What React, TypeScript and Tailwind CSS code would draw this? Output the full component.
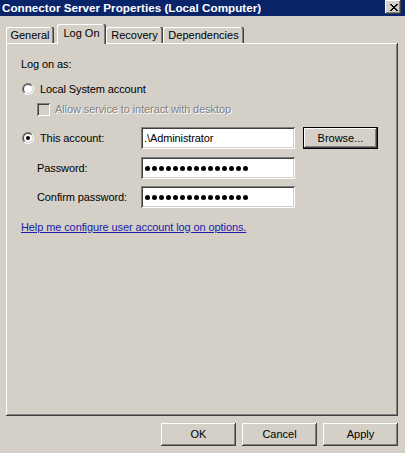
import type { ReactNode } from "react";

// classic 3D bevels
const raised =
  "bg-[#d4d0c8] shadow-[inset_-1px_-1px_#404040,inset_1px_1px_#fff,inset_-2px_-2px_#808080]";
const sunken =
  "bg-white shadow-[inset_1px_1px_#808080,inset_-1px_-1px_#fff,inset_2px_2px_#404040,inset_-2px_-2px_#d4d0c8]";

function CloseGlyph() {
  const rows = ["11000011", "01100110", "00111100", "00011000", "00111100", "01100110", "11000011"];
  return (
    <svg width="8" height="7" viewBox="0 0 8 7" shapeRendering="crispEdges">
      {rows.flatMap((r, y) =>
        r.split("").map((c, x) => (c === "1" ? <rect key={`${x}-${y}`} x={x} y={y} width="1" height="1" fill="#000" /> : null)),
      )}
    </svg>
  );
}

function Radio({ checked }: { checked?: boolean }) {
  return (
    <span className="flex h-[12px] w-[12px] shrink-0 rounded-full border border-t-[#808080] border-l-[#808080] border-b-white border-r-white">
      <span className="flex flex-1 items-center justify-center rounded-full border border-t-[#404040] border-l-[#404040] border-b-[#d4d0c8] border-r-[#d4d0c8] bg-white">
        {checked ? <span className="h-[4px] w-[4px] rounded-full bg-black" /> : null}
      </span>
    </span>
  );
}

function Tab({ label, width, selected }: { label: string; width: string; selected?: boolean }) {
  return (
    <div
      className={[
        "flex justify-center rounded-t-[2px] bg-[#d4d0c8] shadow-[inset_-1px_0_#404040,inset_-2px_0_#808080,inset_1px_1px_#fff]",
        width,
        selected ? "relative z-10 -mb-px h-[20px] pt-[3px]" : "h-[16px] pt-[2px]",
      ].join(" ")}
    >
      <span className="leading-[13px]">{label}</span>
    </div>
  );
}

function Edit({ children }: { children?: ReactNode }) {
  return <div className={`flex h-[22px] w-[154px] items-center pl-[3px] ${sunken}`}>{children}</div>;
}

function Dots({ count }: { count: number }) {
  return (
    <div className="flex gap-[2px] pl-[1px]" aria-label="password">
      {Array.from({ length: count }, (_, i) => (
        <span key={i} className="h-[5px] w-[5px] rounded-full bg-black" />
      ))}
    </div>
  );
}

function Button({ label, isDefault }: { label: string; isDefault?: boolean }) {
  if (isDefault) {
    return (
      <div className="h-[22px] w-[75px] border border-black">
        <div className={`flex h-full w-full items-center justify-center ${raised}`}>{label}</div>
      </div>
    );
  }
  return <div className={`flex h-[23px] w-[75px] items-center justify-center ${raised}`}>{label}</div>;
}

export default function App() {
  return (
    <div className="h-[453px] w-[405px] overflow-hidden bg-[#d4d0c8] font-['Liberation_Sans',Arial,sans-serif] text-[11px] text-black">
      {/* caption */}
      <div className="flex h-[16px] items-start justify-between bg-[#0a246a] pl-[2px] pr-[4px]">
        <span className="pt-[1px] text-[11.7px] font-bold leading-[13px] text-white">
          Connector Server Properties (Local Computer)
        </span>
        <div className={`flex h-[14px] w-[16px] items-center justify-center pl-px ${raised}`}>
          <CloseGlyph />
        </div>
      </div>

      {/* tab strip */}
      <div className="flex h-[27px] items-end pl-[6px]">
        <Tab label="General" width="w-[48px]" />
        <div className="ml-[3px]">
          <Tab label="Log On" width="w-[49px]" selected />
        </div>
        <Tab label="Recovery" width="w-[57px]" />
        <Tab label="Dependencies" width="w-[81px]" />
      </div>

      {/* page */}
      <div className="ml-[6px] h-[373px] w-[392px] shadow-[inset_-1px_-1px_#404040,inset_1px_1px_#fff,inset_-2px_-2px_#808080]">
        <div className="flex flex-col pl-[15px] pt-[15px] tracking-[-0.1px]">
          <div className="h-[13px] leading-[13px]">Log on as:</div>

          <div className="mt-[12px] flex h-[12px] items-center pl-px">
            <Radio />
            <span className="ml-[6px] leading-[13px]">Local System account</span>
          </div>

          <div className="mt-[8px] flex h-[13px] items-center pl-[16px]">
            <span className="h-[13px] w-[13px] shrink-0 bg-[#d4d0c8] shadow-[inset_1px_1px_#808080,inset_-1px_-1px_#fff,inset_2px_2px_#404040,inset_-2px_-2px_#d4d0c8]" />
            <span className="ml-[5px] leading-[13px] text-[#808080] [text-shadow:1px_1px_0_#fff]">
              Allow service to interact with desktop
            </span>
          </div>

          <div className="mt-[11px] flex h-[22px] items-center pl-px">
            <div className="flex w-[119px] items-center">
              <Radio checked />
              <span className="ml-[6px] leading-[13px]">This account:</span>
            </div>
            <Edit>
              <span className="leading-[13px]">.\Administrator</span>
            </Edit>
            <div className="ml-[8px] tracking-normal">
              <Button label="Browse..." isDefault />
            </div>
          </div>

          <div className="mt-[8px] flex h-[22px] items-center pl-[16px]">
            <span className="w-[104px] leading-[13px]">Password:</span>
            <Edit>
              <Dots count={15} />
            </Edit>
          </div>

          <div className="mt-[7px] flex h-[22px] items-center pl-[16px]">
            <span className="w-[104px] leading-[13px]">Confirm password:</span>
            <Edit>
              <Dots count={15} />
            </Edit>
          </div>

          <a className="mt-[13px] h-[13px] self-start leading-[13px] text-[#1c1ca8] underline underline-offset-1">
            Help me configure user account log on options.
          </a>
        </div>
      </div>

      {/* dialog buttons */}
      <div className="mt-[7px] flex justify-end gap-[6px] pr-[7px]">
        <Button label="OK" />
        <Button label="Cancel" />
        <Button label="Apply" />
      </div>
    </div>
  );
}
